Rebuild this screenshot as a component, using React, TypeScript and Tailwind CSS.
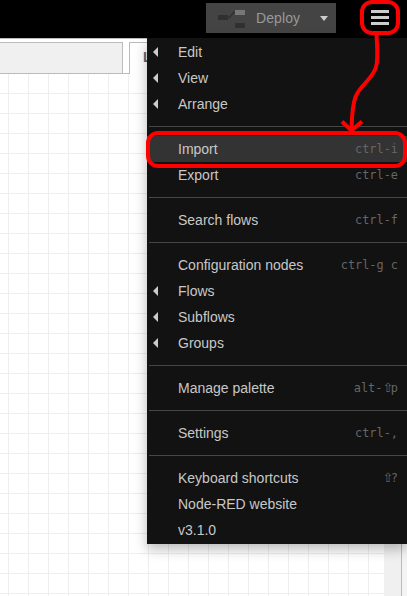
import React from "react";

type Item = { label: string; keys?: string; sub?: boolean; active?: boolean };

const groups: Item[][] = [
  [
    { label: "Edit", sub: true },
    { label: "View", sub: true },
    { label: "Arrange", sub: true },
  ],
  [
    { label: "Import", keys: "ctrl-i", active: true },
    { label: "Export", keys: "ctrl-e" },
  ],
  [{ label: "Search flows", keys: "ctrl-f" }],
  [
    { label: "Configuration nodes", keys: "ctrl-g c" },
    { label: "Flows", sub: true },
    { label: "Subflows", sub: true },
    { label: "Groups", sub: true },
  ],
  [{ label: "Manage palette", keys: "alt-⇧p" }],
  [{ label: "Settings", keys: "ctrl-," }],
  [
    { label: "Keyboard shortcuts", keys: "⇧?" },
    { label: "Node-RED website" },
    { label: "v3.1.0" },
  ],
];

function Keys({ text }: { text: string }) {
  return (
    <span className="whitespace-pre font-['DejaVu_Sans_Mono',monospace] text-[11.9px] leading-5 text-[#666]">
      {text.split(/(⇧)/).map((part, i) =>
        part === "⇧" ? (
          <span key={i} className="font-['DejaVu_Sans',sans-serif] text-[13px] leading-none tracking-[-3px] mr-[0.5px]">
            {part}
          </span>
        ) : (
          part
        ),
      )}
    </span>
  );
}

function MenuRow({ item }: { item: Item }) {
  return (
    <div className={`flex h-[26px] items-center pr-[9px] ${item.active ? "bg-[#333]" : ""}`}>
      <div className="flex w-[31px] shrink-0 items-center pl-1.5">
        {item.sub && (
          <svg width="5" height="10" viewBox="0 0 5 10">
            <path d="M5 0v10L0 5z" fill="#ccc" />
          </svg>
        )}
      </div>
      <span className="grow whitespace-nowrap text-[14px] leading-5 text-[#c8c8c8]">{item.label}</span>
      {item.keys && <Keys text={item.keys} />}
    </div>
  );
}

function Header() {
  return (
    <header className="flex h-[38px] shrink-0 items-start bg-black pl-[206px] pt-[3px]">
      <button className="flex h-[30px] w-[130px] items-center bg-[#444]">
        <svg width="28" height="20" viewBox="0 0 28 20" className="ml-3 shrink-0">
          <path d="M9.500 9.500h2L16 4h2" fill="none" stroke="#303030" strokeWidth="1.500" />
          <path d="M0 7h10v5H0zM17 15h10v5H17z" fill="#303030" />
          <path d="M17 2h10v5H17z" fill="#777" />
        </svg>
        <span className="ml-[10px] text-[14px] leading-5 tracking-[0.1px] text-[#999]">Deploy</span>
        <svg width="8" height="5" viewBox="0 0 8 5" className="ml-auto mr-2">
          <path d="M0 0h8L4 5z" fill="#ccc" />
        </svg>
      </button>
      <button className="ml-[35px] mt-[7px] flex w-[18px] flex-col gap-[3px]">
        <span className="h-[3px] bg-[#ccc]" />
        <span className="h-[3px] bg-[#ccc]" />
        <span className="h-[3px] bg-[#ccc]" />
      </button>
    </header>
  );
}

export default function App() {
  return (
    <div className="relative flex h-[596px] w-[407px] flex-col overflow-hidden bg-white font-['Liberation_Sans',Arial,sans-serif]">
      <Header />
      <div className="flex min-h-0 grow">
        <main className="flex w-[401px] flex-col border-t border-[#bbb]">
          <div className="flex h-[35px] shrink-0 items-end">
            <div className="h-8 w-[123px] border border-l-0 border-[#bbb] bg-[#f0f0f0]" />
            <div className="h-px w-1.5 bg-[#bbb]" />
            <div className="h-8 grow border-l border-t border-[#bbb] bg-white pl-[13px] pt-[4px] text-[14px] font-bold leading-5 text-[#666]">
              L
            </div>
          </div>
          <div className="flex grow">
            <div className="w-[384px] bg-[linear-gradient(to_right,#eee_1px,transparent_1px),linear-gradient(to_bottom,#eee_1px,transparent_1px)] bg-[length:20px_20px] bg-[position:8px_19px]" />
            <div className="grow bg-[#f0f0f0]" />
          </div>
        </main>
        <aside className="grow border-l border-t border-[#bbb] bg-[#f3f3f3]" />
      </div>

      <nav className="absolute left-[147px] top-[38px] w-[260px] bg-[#121212] py-px shadow-[0_5px_12px_rgba(0,0,0,0.28)]">
        {groups.map((group, i) => (
          <React.Fragment key={i}>
            {i > 0 && <div className="my-[9px] ml-0.5 h-px bg-[#464646]" />}
            {group.map((item) => (
              <MenuRow key={item.label} item={item} />
            ))}
          </React.Fragment>
        ))}
      </nav>

      <svg width="407" height="596" viewBox="0 0 407 596" className="pointer-events-none absolute inset-0" fill="none" stroke="#f00" strokeWidth="4">
        <rect x="362" y="2" width="36" height="31" rx="10" />
        <rect x="148" y="133" width="257" height="33" rx="10" />
        <path d="M376.500 34C377 46 378.500 59 376 67C372 80 360 85 355.500 97C352 106 352 116 351.500 130" />
        <path d="M342 121.500L351.500 130.500L362 121.500" />
      </svg>
    </div>
  );
}
